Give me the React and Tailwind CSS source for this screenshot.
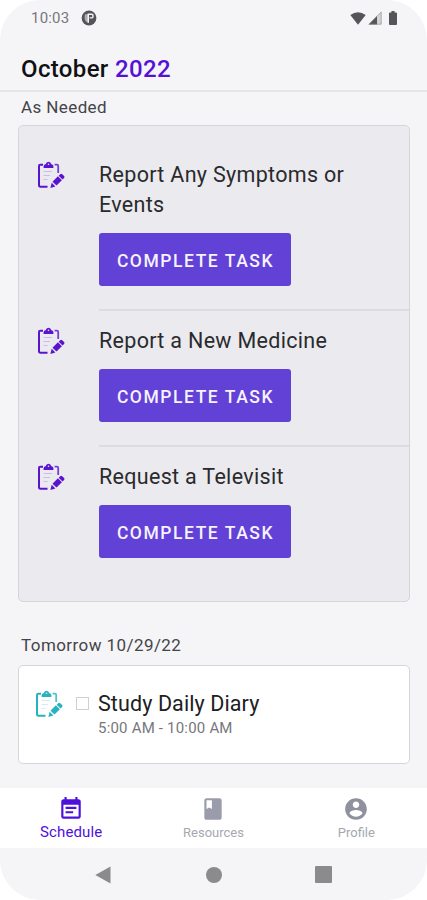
const tasks = [
    { title: 'Report Any Symptoms or Events' },
    { title: 'Report a New Medicine' },
    { title: 'Request a Televisit' },
];

function ClipboardIcon({ className }) {
    return (
        <svg viewBox="0 0 28 28" className={className} fill="none">
            <path d="M6 3.7H3.2Q2 3.7 2 5V24Q2 25.8 3.4 25.8H10.5" stroke="currentColor" strokeWidth="2" />
            <path d="M17.6 3.7H20Q21.2 3.7 21.2 5V12" stroke="currentColor" strokeWidth="1.8" opacity="0.8" />
            <path d="M6.6 6.9V5Q6.8 3.6 8.6 3.3Q9.2 0.8 11.5 0.8Q13.8 0.8 14.4 3.3Q16.2 3.6 16.4 5V6.9Z" fill="currentColor" />
            <circle cx="11.5" cy="3.2" r="0.8" fill="#ebebef" />
            <path d="M6.5 10.5H15M6.5 14.5H13M6.5 18.5H10.5" stroke="currentColor" strokeWidth="1" opacity="0.22" />
            <path d="M23.2 13.2Q24.2 12.4 25.2 13.2L27.1 15Q27.9 16 27.1 16.9L25.5 18.4L21.7 14.7Z" fill="currentColor" />
            <path d="M20.9 15.3L24.9 19.2L19.5 24.6L15.5 20.7Z" fill="currentColor" />
            <path d="M14.7 21.8L18.4 25.4L13.4 27Z" fill="currentColor" />
        </svg>
    );
}

function StatusBar() {
    return (
        <div className="flex h-9 items-center justify-between pl-[31px] pr-[30px] text-[#5f5f63]">
            <div className="flex items-center">
                <span className="text-[15px] tracking-[0.2px] text-[#77777b]">10:03</span>
                <svg viewBox="0 0 16 16" className="ml-3 size-4">
                    <circle cx="8" cy="8" r="7.4" fill="#555559" />
                    <path d="M3.9 4.3H7.3V12.6Q3.6 11.5 3.6 8Z" fill="#f5f5f8" opacity="0.55" />
                    <path d="M7.3 12.8V4.2H10.8Q12 4.2 12 5.4V6.6Q12 7.9 10.8 7.9H8.6" fill="none" stroke="#f5f5f8" strokeWidth="1.4" />
                </svg>
            </div>
            <div className="flex items-center">
                <svg viewBox="0 0 16 13" className="h-[13px] w-4">
                    <path d="M0.3 3Q8 -2.6 15.7 3L8 12.8Z" fill="#555559" />
                </svg>
                <svg viewBox="0 0 14 14" className="ml-[2px] h-[14px] w-[14px]">
                    <path d="M13.5 0.5V13.5H0.5Z" fill="#d4d4d7" />
                    <path d="M9 5V13.5H0.5Z" fill="#555559" />
                    <path d="M13.2 1V13.2H1.2Z" fill="none" stroke="#8b8b8f" strokeWidth="0.6" />
                </svg>
                <svg viewBox="0 0 9 15" className="ml-[7px] h-[14px] w-[8px]" preserveAspectRatio="none">
                    <path d="M2.7 0H6.3V1.5H8Q9 1.5 9 2.5V14Q9 15 8 15H1Q0 15 0 14V2.5Q0 1.5 1 1.5H2.7Z" fill="#555559" />
                </svg>
            </div>
        </div>
    );
}

function TaskRow({ title, first }) {
    return (
        <div className="flex">
            <ClipboardIcon className={first ? 'ml-[18px] mt-[35px] size-7 shrink-0 text-[#5a14d0]' : 'ml-[18px] mt-[18px] size-7 shrink-0 text-[#5a14d0]'} />
            <div className={first ? 'ml-[34px] flex-1 pt-[34px] pb-[22.5px]' : 'ml-[34px] flex-1 border-t-2 border-[#dddde1] pt-[15px] pb-[22.5px]'}>
                <h3 className="max-w-[280px] text-[21.5px] leading-[29.5px] tracking-[0.31px] text-[#2a2a2d]">{title}</h3>
                <button className="mt-[13.5px] flex h-[53.5px] w-[192px] items-center justify-center rounded-[3px] bg-[#6241d6] pl-px pt-[3px] text-[17.5px] font-medium tracking-[1.55px] text-[#f6f2ff]">
                    COMPLETE TASK
                </button>
            </div>
        </div>
    );
}

function BottomTabs() {
    return (
        <div className="grid h-[60px] grid-cols-3 bg-white text-[13px] text-[#a6a8b0]">
            <div className="flex flex-col items-center pt-2 text-[#4f10dc]">
                <svg viewBox="0 0 24 24" className="size-[26px]" fill="currentColor">
                    <path d="M19 3h-1V1h-2v2H8V1H6v2H5c-1.11 0-1.99.9-1.99 2L3 19c0 1.1.89 2 2 2h14c1.1 0 2-.9 2-2V5c0-1.1-.9-2-2-2zm0 16H5V8h14v11zM7 10h10v2H7zm0 4h7v2H7z" />
                </svg>
                <span className="text-[15px] leading-5 tracking-[0.1px]">Schedule</span>
            </div>
            <div className="flex flex-col items-center pt-2">
                <svg viewBox="0 0 24 24" className="size-[26px]" fill="#9a9cab">
                    <path d="M18 2H6c-1.1 0-2 .9-2 2v16c0 1.1.9 2 2 2h12c1.1 0 2-.9 2-2V4c0-1.1-.9-2-2-2zM6 4h5v8l-2.5-1.5L6 12V4z" />
                </svg>
                <span className="leading-[21px]">Resources</span>
            </div>
            <div className="flex flex-col items-center pt-2 pl-px">
                <svg viewBox="0 0 24 24" className="size-[26px]" fill="#8f919f">
                    <path d="M12 2C6.48 2 2 6.48 2 12s4.48 10 10 10 10-4.48 10-10S17.52 2 12 2zm0 3c1.66 0 3 1.34 3 3s-1.34 3-3 3-3-1.34-3-3 1.34-3 3-3zm0 14.2c-2.5 0-4.71-1.28-6-3.22.03-1.99 4-3.08 6-3.08 1.99 0 5.97 1.09 6 3.08-1.29 1.94-3.5 3.22-6 3.22z" />
                </svg>
                <span className="leading-[21px]">Profile</span>
            </div>
        </div>
    );
}

function SystemNav() {
    return (
        <div className="flex h-[52px] items-center pl-[95px] pt-px text-[#8b8b8d]">
            <svg viewBox="0 0 16 18" className="h-[18px] w-4" fill="currentColor">
                <path d="M15.5 0.5V17.5L0.3 9Z" />
            </svg>
            <div className="ml-[95px] size-4 rounded-full bg-[#8b8b8d]"></div>
            <div className="ml-[93px] size-[17px] rounded-[1px] bg-[#8b8b8d]"></div>
        </div>
    );
}

export default function App() {
    return (
        <div className="h-[900px] w-[427px] bg-white font-['Roboto',sans-serif]">
            <div className="flex h-full flex-col overflow-hidden rounded-[40px] bg-[#f5f5f8]">
                <StatusBar />
                <header className="flex h-14 items-center border-b-2 border-[#e5e5e8] pl-[21px] pt-3">
                    <h1 className="text-[24px] font-medium tracking-[0.35px] text-[#111113]">
                        October <span className="text-[#5512d4]">2022</span>
                    </h1>
                </header>
                <main className="flex-1 pl-[18px] pr-[17px]">
                    <h2 className="h-[33px] pl-[3px] pt-[3px] text-[17px] leading-6 tracking-[0.4px] text-[#444448]">As Needed</h2>
                    <section className="h-[477px] rounded-[5px] border-[1.5px] border-[#d6d6da] bg-[#ebebef]">
                        {tasks.map((task, index) => (
                            <TaskRow key={task.title} title={task.title} first={index === 0} />
                        ))}
                    </section>
                    <h2 className="h-[63px] pl-[3px] pt-[31px] text-[17px] leading-6 tracking-[0.43px] text-[#444448]">Tomorrow 10/29/22</h2>
                    <section className="flex h-[99px] rounded-[5px] border-[1.5px] border-[#d6d6da] bg-white pl-4">
                        <ClipboardIcon className="mt-[24px] size-7 shrink-0 text-[#27b3bd]" />
                        <div className="ml-[13px] mt-[31px] size-[13px] border-[1.5px] border-[#cfcfd4]"></div>
                        <div className="ml-[9px] pt-[25px]">
                            <h3 className="text-[21.5px] leading-[26px] tracking-[0.1px] text-[#202023]">Study Daily Diary</h3>
                            <p className="text-[15px] leading-[22px] tracking-[0.2px] text-[#77777b]">5:00 AM - 10:00 AM</p>
                        </div>
                    </section>
                </main>
                <BottomTabs />
                <SystemNav />
            </div>
        </div>
    );
}
